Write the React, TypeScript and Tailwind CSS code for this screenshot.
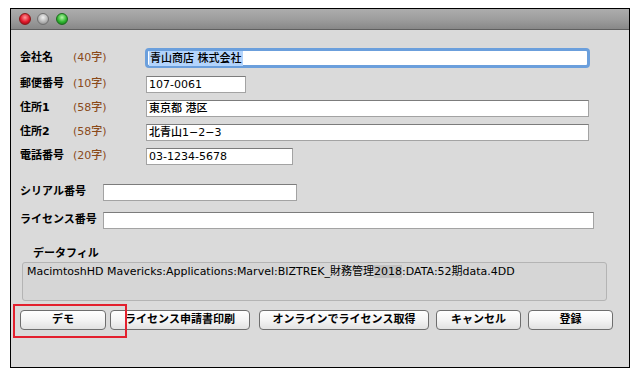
const font = {
  fontFamily: '"DejaVu Sans", "Noto Sans CJK JP", sans-serif',
};

function Field({ w, children }: { w: string; children?: React.ReactNode }) {
  return (
    <div
      className={`${w} h-[17px] bg-white border border-[#a3a3a3] border-t-[#7c7c7c] flex items-center pl-[2px] text-[11px] font-medium leading-none text-black whitespace-nowrap overflow-hidden`}
    >
      {children}
    </div>
  );
}

function Btn({ w, ml, label }: { w: string; ml: string; label: string }) {
  return (
    <div
      className={`${w} ${ml} h-[20px] rounded-[4px] border border-[#6e6e6e] bg-gradient-to-b from-white via-[#f4f4f4] to-[#e2e2e2] flex items-center justify-center text-[11px] font-bold text-black`}
    >
      {label}
    </div>
  );
}

export default function App() {
  const rows = [
    { name: "郵便番号", note: "(10字)", w: "w-[100px]", value: "107-0061" },
    { name: "住所1", note: "(58字)", w: "w-[443px]", value: "東京都 港区" },
    { name: "住所2", note: "(58字)", w: "w-[443px]", value: "北青山1−2−3" },
    { name: "電話番号", note: "(20字)", w: "w-[147px]", value: "03-1234-5678" },
  ];

  return (
    <div className="relative w-[638px] h-[375px] bg-white pt-[8px] pl-[10px]" style={font}>
      <div className="w-[620px] h-[360px] border border-black bg-[#dadada] flex flex-col">
        {/* title bar */}
        <div className="h-[21px] border-b border-[#5f5f5f] bg-gradient-to-b from-[#adadad] via-[#9e9e9e] to-[#888888] flex items-center pl-[8px] gap-[6px] shrink-0">
          <div className="w-[12px] h-[12px] rounded-full border border-[#8a1a1a] bg-[radial-gradient(circle_at_50%_35%,#ff9a9a,#e0172a_55%,#8c0b14)]" />
          <div className="w-[12px] h-[12px] rounded-full border border-[#707070] bg-[radial-gradient(circle_at_50%_35%,#f2f2f2,#b5b5b5_55%,#7c7c7c)]" />
          <div className="w-[12px] h-[12px] rounded-full ml-px border border-[#1d6b1d] bg-[radial-gradient(circle_at_50%_35%,#b6f7a8,#2fb52f_55%,#11701a)]" />
        </div>

        <div className="pl-[9px] flex flex-col text-[11px] text-black">
          {/* 会社名 */}
          <div className="mt-[18px] mb-[4px] h-[20px] flex items-center">
            <span className="w-[53px] font-bold">会社名</span>
            <span className="w-[72px] font-medium text-[#8a4a1a]">(40字)</span>
            <div className="w-[445px] h-[20px] rounded-[4px] border-[3px] border-[#6b9fdc] bg-white flex items-center pl-[1px] font-medium leading-none whitespace-nowrap">
              <span className="bg-[#b3d4fc] px-px py-[2px]">青山商店 株式会社</span>
            </div>
          </div>

          {rows.map((r) => (
            <div key={r.name} className="h-[24px] flex items-center">
              <span className="w-[53px] font-bold">{r.name}</span>
              <span className="w-[73px] font-medium text-[#8a4a1a]">{r.note}</span>
              <Field w={r.w}>{r.value}</Field>
            </div>
          ))}

          {/* シリアル / ライセンス */}
          <div className="mt-[12px] h-[24px] flex items-center">
            <span className="w-[83px] font-bold">シリアル番号</span>
            <Field w="w-[194px]" />
          </div>
          <div className="mt-[4px] h-[24px] flex items-center">
            <span className="w-[83px] font-bold">ライセンス番号</span>
            <Field w="w-[491px]" />
          </div>

          {/* データフィル */}
          <div className="mt-[15px] h-[14px] ml-[13px] flex items-center font-bold">データフィル</div>
          <div className="mt-[1px] ml-[2px] w-[585px] h-[39px] rounded-[3px] border border-[#b4b4b4] bg-[#d6d6d6] px-[4px] pt-[2px] leading-[14px] whitespace-nowrap">
            MacimtoshHD Mavericks:Applications:Marvel:BIZTREK_財務管理
            <span className="bg-[#c2c2c2]">2018</span>:DATA:52期data.4DD
          </div>

          {/* buttons */}
          <div className="mt-[9px] flex">
            <Btn w="w-[86px]" ml="ml-0" label="デモ" />
            <Btn w="w-[140px]" ml="ml-[4px]" label="ライセンス申請書印刷" />
            <Btn w="w-[170px]" ml="ml-[9px]" label="オンラインでライセンス取得" />
            <Btn w="w-[85px]" ml="ml-[7px]" label="キャンセル" />
            <Btn w="w-[85px]" ml="ml-[7px]" label="登録" />
          </div>
        </div>
      </div>

      {/* annotation frame */}
      <div className="absolute left-[13px] top-[304px] w-[114px] h-[34px] border-2 border-[#e3202e]" />
    </div>
  );
}
